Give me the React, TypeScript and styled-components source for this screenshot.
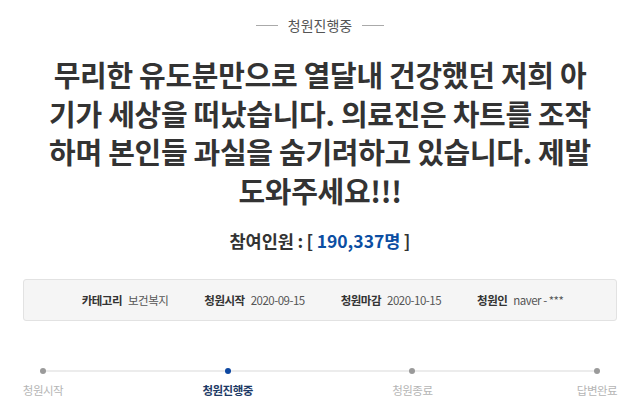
import React from "react";
import styled, { createGlobalStyle } from "styled-components";

const GlobalStyle = createGlobalStyle`
  html, body {
    margin: 0;
    padding: 0;
    background: #ffffff;
  }
  body {
    font-family: "Noto Sans CJK KR", "Noto Sans", sans-serif;
    color: #333;
  }
`;

const Page = styled.div`
  width: 640px;
  height: 418px;
  overflow: hidden;
  display: flex;
  flex-direction: column;
  align-items: center;
`;

const Status = styled.div`
  margin-top: 15px;
  display: flex;
  align-items: center;
  gap: 10px;
  font-size: 14px;
  line-height: 20px;
  color: #555;

  &::before,
  &::after {
    content: "";
    width: 22px;
    height: 1px;
    background: #aaa;
  }
`;

const Title = styled.h1`
  margin: 20px 0 0;
  text-align: center;
  font-size: 29px;
  line-height: 38.5px;
  font-weight: 700;
  color: #333;
  letter-spacing: -0.3px;
`;

const TitleLine = styled.span`
  display: block;
  white-space: nowrap;
`;

const Count = styled.div`
  margin-top: 19px;
  font-size: 17.5px;
  line-height: 26px;
  font-weight: 700;
  color: #333;
  word-spacing: -0.5px;
`;

const Number = styled.span`
  color: #0b4ea2;
`;

const InfoBox = styled.div`
  margin-top: 25px;
  width: 594px;
  height: 42px;
  box-sizing: border-box;
  border: 1px solid #e2e2e2;
  border-radius: 3px;
  background: #f5f5f5;
  display: flex;
  align-items: center;
  justify-content: center;
  gap: 36px;
  padding-left: 5px;
`;

const Item = styled.div`
  display: flex;
  align-items: baseline;
  gap: 6px;
  font-size: 11.5px;
`;

const Label = styled.span`
  font-weight: 700;
  color: #333;
  letter-spacing: -0.5px;
`;

const Value = styled.span`
  color: #555;
  letter-spacing: -0.5px;
`;

const Steps = styled.div`
  margin-top: 44px;
  width: 598px;
  position: relative;
  display: flex;
  justify-content: space-between;

  &::before {
    content: "";
    position: absolute;
    left: 22px;
    right: 22px;
    top: 5px;
    height: 2px;
    background: #ececec;
  }
`;

const Step = styled.div<{ active?: boolean }>`
  position: relative;
  width: 44px;
  display: flex;
  flex-direction: column;
  align-items: center;
  gap: 8px;
  font-size: 11.5px;
  line-height: 16px;
  letter-spacing: -0.5px;
  white-space: nowrap;
  color: ${({ active }) => (active ? "#1d3a66" : "#b5b5b5")};
  font-weight: ${({ active }) => (active ? 700 : 400)};
`;

const Dot = styled.span<{ active?: boolean }>`
  width: 6px;
  height: 6px;
  margin-top: 3px;
  border-radius: 50%;
  background: ${({ active }) => (active ? "#0d47a1" : "#9a9a9a")};
`;

const titleLines = [
  "무리한 유도분만으로 열달내 건강했던 저희 아",
  "기가 세상을 떠났습니다. 의료진은 차트를 조작",
  "하며 본인들 과실을 숨기려하고 있습니다. 제발",
  "도와주세요!!!",
];

const info = [
  { label: "카테고리", value: "보건복지" },
  { label: "청원시작", value: "2020-09-15" },
  { label: "청원마감", value: "2020-10-15" },
  { label: "청원인", value: "naver - ***" },
];

const steps = ["청원시작", "청원진행중", "청원종료", "답변완료"];

export default function App() {
  return (
    <>
      <GlobalStyle />
      <Page>
        <Status>청원진행중</Status>
        <Title>
          {titleLines.map((l) => (
            <TitleLine key={l}>{l}</TitleLine>
          ))}
        </Title>
        <Count>
          참여인원 : [ <Number>190,337명</Number> ]
        </Count>
        <InfoBox>
          {info.map((i) => (
            <Item key={i.label}>
              <Label>{i.label}</Label>
              <Value>{i.value}</Value>
            </Item>
          ))}
        </InfoBox>
        <Steps>
          {steps.map((s, idx) => (
            <Step key={s} active={idx === 1}>
              <Dot active={idx === 1} />
              {s}
            </Step>
          ))}
        </Steps>
      </Page>
    </>
  );
}
